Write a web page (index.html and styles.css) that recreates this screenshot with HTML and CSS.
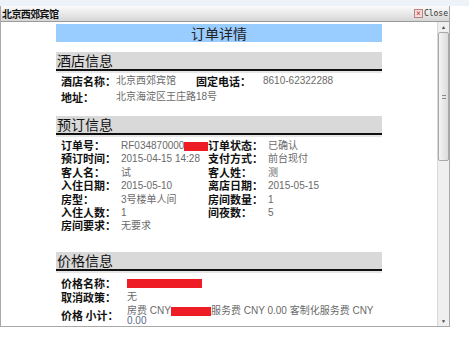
FILE: index.html
```html
<!DOCTYPE html>
<html lang="zh-CN">
<head>
    <meta charset="UTF-8">
    <title>订单详情</title>
    <link rel="stylesheet" href="styles.css">
</head>
<body>
<div class="topband"></div>
<div class="dialog">
    <!-- Title bar -->
    <div class="titlebar">
        <span class="title">北京西郊宾馆</span>
        <span class="close"><span class="close-icon">×</span>Close</span>
    </div>

    <div class="dialog-body">
        <div class="content">
            <div class="page-title">订单详情</div>

            <!-- Hotel -->
            <div class="section-head">酒店信息</div>
            <div class="rows hotel">
                <span class="lbl">酒店名称：</span><span class="val">北京西郊宾馆</span>
                <span class="lbl">固定电话：</span><span class="val">8610-62322288</span>
                <span class="lbl">地址：</span><span class="val wide">北京海淀区王庄路18号</span>
            </div>

            <!-- Booking -->
            <div class="section-head">预订信息</div>
            <div class="rows booking">
                <span class="lbl">订单号：</span><span class="val">RF034870000<i class="mask m1"></i></span>
                <span class="lbl">订单状态：</span><span class="val">已确认</span>
                <span class="lbl">预订时间：</span><span class="val">2015-04-15 14:28</span>
                <span class="lbl">支付方式：</span><span class="val">前台现付</span>
                <span class="lbl">客人名：</span><span class="val">试</span>
                <span class="lbl">客人姓：</span><span class="val">测</span>
                <span class="lbl">入住日期：</span><span class="val">2015-05-10</span>
                <span class="lbl">离店日期：</span><span class="val">2015-05-15</span>
                <span class="lbl">房型：</span><span class="val">3号楼单人间</span>
                <span class="lbl">房间数量：</span><span class="val">1</span>
                <span class="lbl">入住人数：</span><span class="val">1</span>
                <span class="lbl">间夜数：</span><span class="val">5</span>
                <span class="lbl">房间要求：</span><span class="val wide">无要求</span>
            </div>

            <!-- Price -->
            <div class="section-head">价格信息</div>
            <div class="rows price">
                <span class="lbl">价格名称：</span><span class="val"><i class="mask m2"></i></span>
                <span class="lbl">取消政策：</span><span class="val">无</span>
                <span class="lbl sum">价格 小计：</span><span class="val sum-val">房费 CNY<i class="mask m3"></i>服务费 CNY 0.00 客制化服务费 CNY <span class="num">0.00</span></span>
            </div>
        </div>

        <!-- Scrollbar -->
        <div class="scrollbar">
            <div class="arrow">▲</div>
            <div class="thumb"><span class="grip"></span></div>
            <div class="track"></div>
            <div class="arrow">▼</div>
        </div>
    </div>
</div>
</body>
</html>
```

FILE: styles.css
```css
* {
    margin: 0;
    padding: 0;
    box-sizing: border-box;
}
body {
    font-family: "Liberation Sans", Arial, "Noto Sans CJK SC", sans-serif;
    font-size: 12px;
    background: #fff;
    color: #000;
    width: 469px;
    height: 345px;
    overflow: hidden;
}

.topband {
    height: 6px;
    background: #eef2f9;
}

/* Dialog */
.dialog {
    width: 450px;
    height: 321px;
    border: 1px solid #a9a9a9;
    border-top: none;
    display: flex;
    flex-direction: column;
    overflow: hidden;
}
.titlebar {
    height: 16px;
    background: linear-gradient(#fbfbfb, #d6d6d6);
    border-bottom: 1px solid #9a9a9a;
    display: flex;
    align-items: center;
    justify-content: space-between;
    padding: 0 1px;
}
.title {
    font-family: "Noto Sans CJK SC", sans-serif;
    font-weight: bold;
    font-size: 10px;
    letter-spacing: -0.6px;
    color: #111;
}
.close {
    font-family: "DejaVu Sans Mono", monospace;
    font-size: 8px;
    color: #333;
    display: flex;
    align-items: center;
}
.close-icon {
    width: 9px;
    height: 9px;
    border: 1px solid #c08080;
    background: #f3dede;
    color: #c33;
    font-size: 8px;
    line-height: 7px;
    text-align: center;
    margin-right: 1px;
}

.dialog-body {
    flex: 1;
    display: flex;
    overflow: hidden;
}
.content {
    flex: 1;
    padding: 2px 0 0 55px;
    overflow: hidden;
}

.page-title {
    width: 326px;
    height: 18px;
    background: #99ccff;
    text-align: center;
    font-family: "Noto Sans CJK SC", sans-serif;
    font-size: 14px;
    line-height: 18px;
    color: #222;
    margin-bottom: 10px;
}

.section-head {
    width: 326px;
    height: 19px;
    background: #d9d9d9;
    border-bottom: 2px solid #111;
    box-shadow: 0 2px 0 #e6e6e6;
    font-family: "Noto Sans CJK SC", sans-serif;
    font-size: 14px;
    line-height: 17px;
    padding-left: 1px;
    color: #111;
}

.rows {
    display: grid;
    padding-left: 5px;
    width: 326px;
}
.lbl {
    font-family: "Noto Sans CJK SC", sans-serif;
    font-weight: bold;
    font-size: 11px;
    color: #111;
    white-space: nowrap;
}
.val {
    color: #6a6a6a;
    font-size: 10px;
    white-space: nowrap;
}
.wide {
    grid-column: 2 / 5;
}

.hotel {
    grid-template-columns: 55px 80px 67px 1fr;
    grid-auto-rows: 16px;
    line-height: 16px;
    padding-top: 2px;
    margin-bottom: 11px;
}
.booking {
    grid-template-columns: 60px 87px 60px 1fr;
    grid-auto-rows: 13.4px;
    line-height: 13.4px;
    padding-top: 4px;
    margin-bottom: 19px;
}
.price {
    grid-template-columns: 66px 1fr;
    grid-auto-rows: 14px;
    line-height: 14px;
    padding-top: 5px;
}
.sum {
    align-self: center;
    padding-top: 8px;
}
.sum-val {
    white-space: normal;
    line-height: 10px;
    padding-top: 2px;
}
.num {
    color: #5a6a8a;
}

.mask {
    display: inline-block;
    background: #ee1c25;
    vertical-align: middle;
}
.m1 { width: 24px; height: 9px; }
.m2 { width: 75px; height: 9px; }
.m3 { width: 40px; height: 9px; }

/* Scrollbar */
.scrollbar {
    width: 12px;
    display: flex;
    flex-direction: column;
    background: #efefef;
    border-left: 1px solid #d8d8d8;
}
.arrow {
    height: 10px;
    font-size: 5px;
    line-height: 10px;
    text-align: center;
    color: #444;
}
.thumb {
    height: 129px;
    background: linear-gradient(90deg, #f4f4f4, #dcdcdc);
    border: 1px solid #a8a8a8;
    border-radius: 2px;
    display: flex;
    align-items: center;
    justify-content: center;
}
.grip {
    width: 4px;
    height: 4px;
    border-top: 1px solid #888;
    border-bottom: 1px solid #888;
}
.track {
    flex: 1;
}
```
